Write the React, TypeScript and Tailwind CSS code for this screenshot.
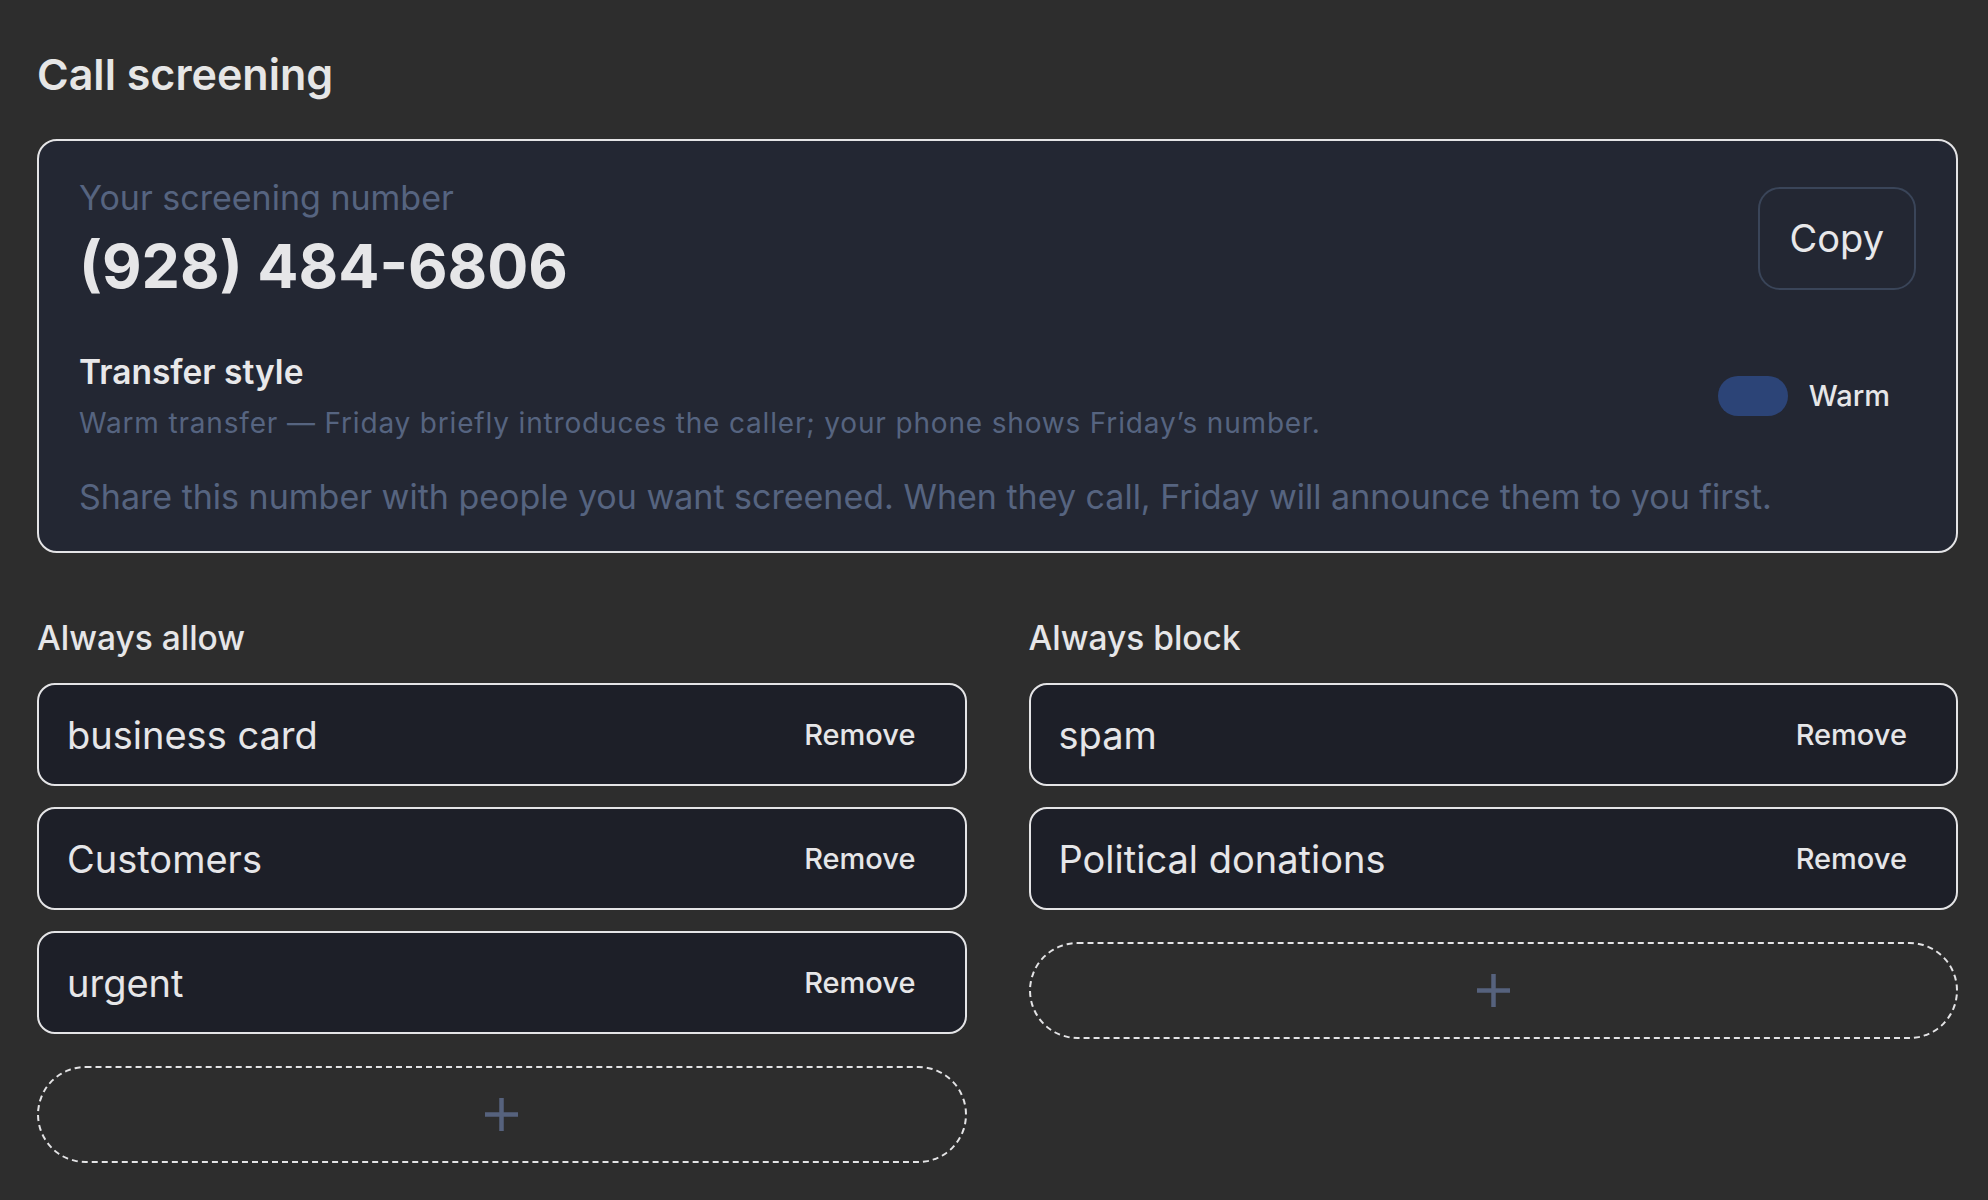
import React from "react";

const font = { fontFamily: "Inter, 'Noto Sans', sans-serif" };

function Plus() {
  return (
    <svg width="33" height="33" viewBox="0 0 33 33" aria-hidden="true">
      <path d="M16.5 0 V33 M0 16.5 H33" stroke="#56627d" strokeWidth="4.5" fill="none" />
    </svg>
  );
}

function Item({ label }: { label: string }) {
  return (
    <div className="flex h-[103px] items-center justify-between rounded-[18px] border-2 border-[#e4e4e6] bg-[#1d1f28] pl-[28px] pr-[49px]">
      <span className="text-[38px] leading-[46px] text-[#e6e6e8]">{label}</span>
      <span className="text-[29px] font-medium leading-[36px] text-[#e6e6e8]">Remove</span>
    </div>
  );
}

function AddButton() {
  return (
    <div className="mt-[11px] flex h-[97px] items-center justify-center rounded-full border-2 border-dashed border-[#e4e4e6]">
      <Plus />
    </div>
  );
}

function Column({ title, items }: { title: string; items: string[] }) {
  return (
    <div className="flex flex-col">
      <div className="text-[33.5px] font-medium leading-[40px] text-[#e6e6e8]">{title}</div>
      <div className="mt-[25px] flex flex-col gap-[21px]">
        {items.map((i) => (
          <Item key={i} label={i} />
        ))}
        <AddButton />
      </div>
    </div>
  );
}

export default function App() {
  return (
    <div className="min-h-[1200px] w-full bg-[#2d2d2d]" style={font}>
      <div className="ml-[37px] w-[1921px] pt-[49px]">
        <h1 className="text-[43px] font-semibold leading-[50px] text-[#e6e6e6]">Call screening</h1>

        <div className="mt-[40px] rounded-[20px] border-2 border-[#e4e4e6] bg-[#232733] px-[40px] pt-[37px] pb-[34px]">
          <div className="flex items-center justify-between">
            <div className="flex flex-col">
              <div className="text-[34px] leading-[40px] text-[#566480]">Your screening number</div>
              <div className="mt-[16px] text-[61px] font-bold leading-[64px] text-[#e6e6e8]">(928) 484-6806</div>
            </div>
            <button className="rounded-[22px] border-2 border-[#3a4559] px-[30px] py-[27px] text-[38px] leading-[45px] text-[#e8e8ea]">
              Copy
            </button>
          </div>

          <div className="mt-[54px] flex items-center justify-between">
            <div className="flex flex-col">
              <div className="text-[33.5px] font-semibold leading-[40px] text-[#e8e8ea]">Transfer style</div>
              <div className="mt-[14px] text-[28px] leading-[34px] tracking-[0.83px] text-[#566480]">
                Warm transfer — Friday briefly introduces the caller; your phone shows Friday’s number.
              </div>
            </div>
            <div className="mr-[26px] flex items-center gap-[21px]">
              <div className="h-[40px] w-[70px] rounded-full bg-[#2c4477]" />
              <span className="text-[29px] font-medium leading-[36px] text-[#e6e6e8]">Warm</span>
            </div>
          </div>

          <div className="mt-[37px] text-[34px] leading-[40px] text-[#566480]">
            Share this number with people you want screened. When they call, Friday will announce them to you first.
          </div>
        </div>

        <div className="mt-[65px] grid grid-cols-2 gap-x-[62px]">
          <Column title="Always allow" items={["business card", "Customers", "urgent"]} />
          <Column title="Always block" items={["spam", "Political donations"]} />
        </div>
      </div>
    </div>
  );
}
